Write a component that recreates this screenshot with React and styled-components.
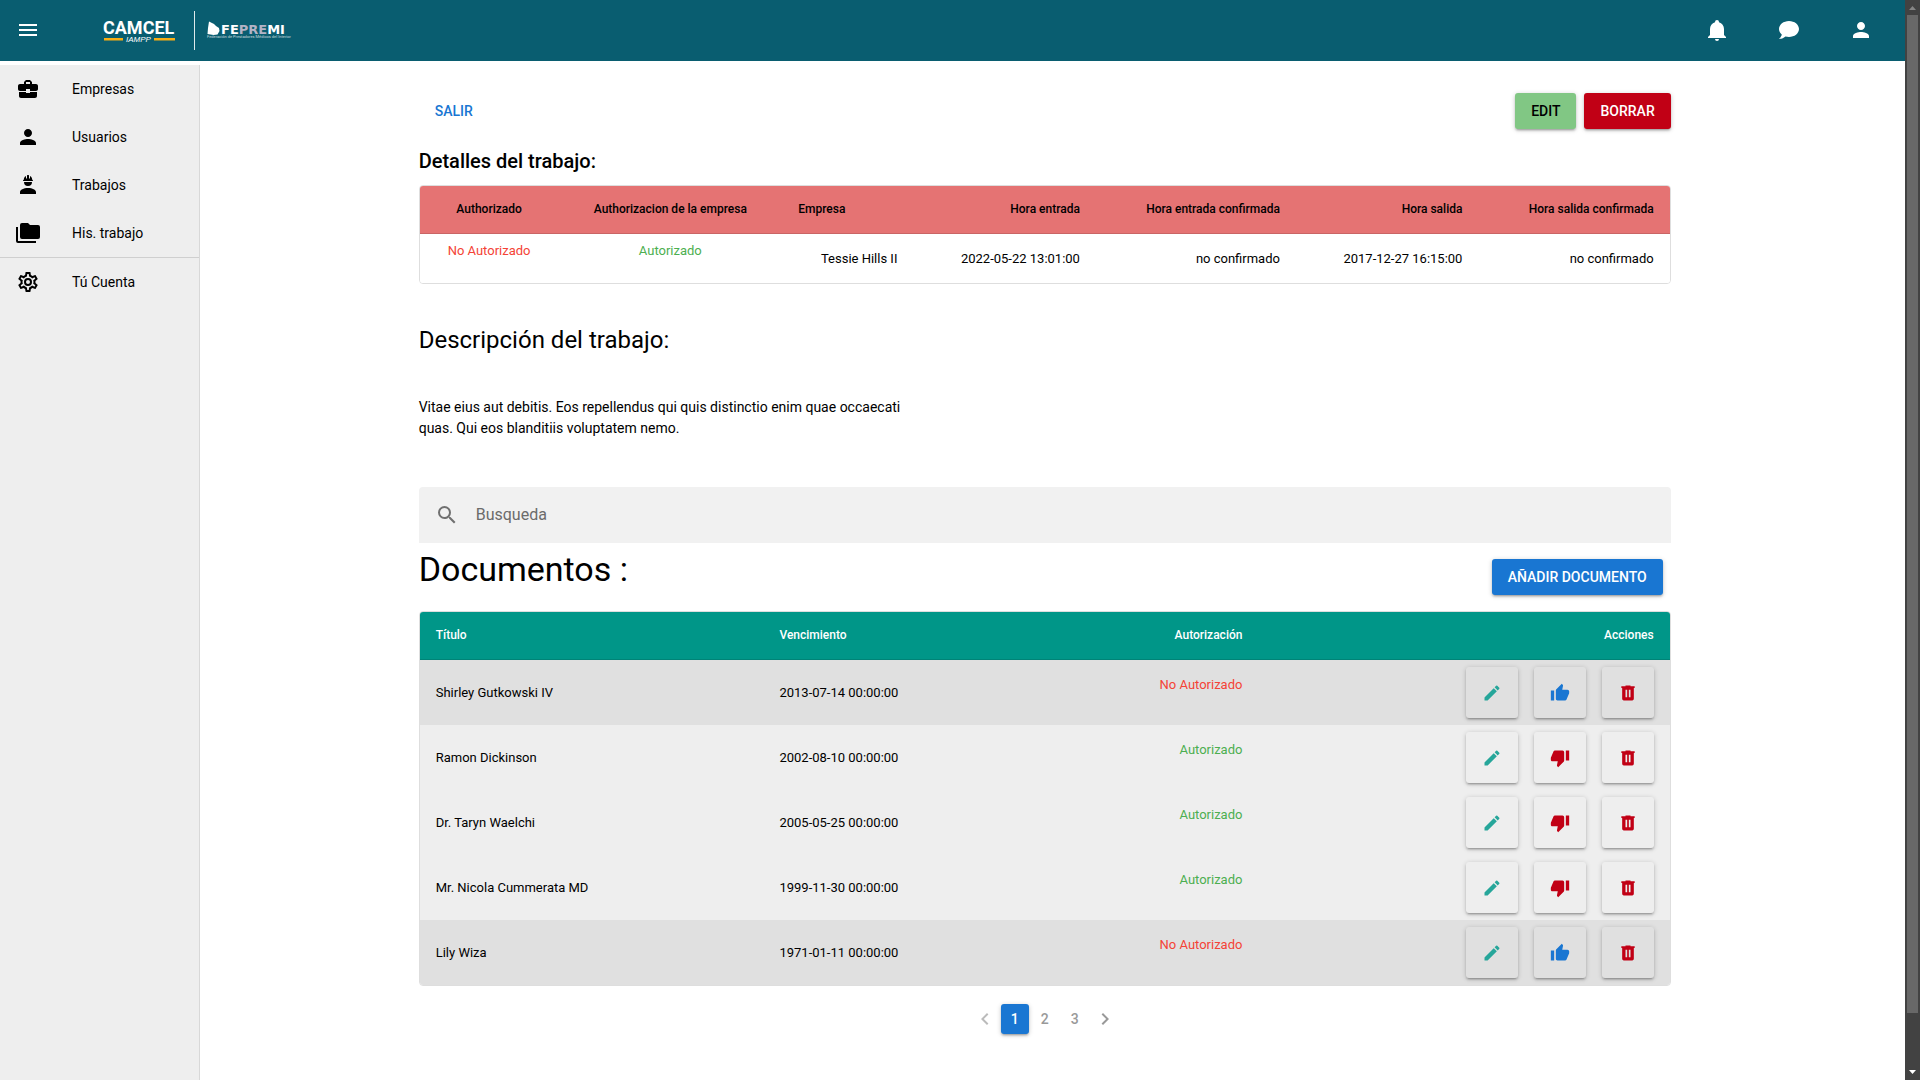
import React, { Component } from 'react'
import styled, { createGlobalStyle } from 'styled-components'
import {
    MdMenu,
    MdPerson,
    MdBusinessCenter,
    MdSearch,
    MdEdit,
    MdThumbUp,
    MdThumbDown,
    MdChevronLeft,
    MdChevronRight
} from 'react-icons/md'

const GlobalStyle = createGlobalStyle`
    *, *::before, *::after {
        box-sizing: border-box;
    }

    body {
        margin: 0;
        background: #fff;
        color: #000;
        font-family: Roboto, "Liberation Sans", sans-serif;
        font-size: 14px;
        line-height: 21px;
    }

    button, input {
        font-family: inherit;
    }

    svg {
        display: block;
        flex-shrink: 0;
    }
`

const raised = '0 1px 5px rgba(0, 0, 0, 0.2), 0 2px 2px rgba(0, 0, 0, 0.14), 0 3px 1px -2px rgba(0, 0, 0, 0.12)'

const Window = styled.div`
    display: flex;
    min-height: 100vh;
`

const Page = styled.div`
    display: flex;
    flex-direction: column;
    flex: 1;
    min-width: 0;
`

const AppBar = styled.header`
    display: flex;
    align-items: center;
    height: 61px;
    padding: 0 32px 1px 16px;
    background: #095d70;
    color: #fff;
`

const BarButton = styled.button`
    display: flex;
    padding: 0;
    border: 0;
    background: none;
    color: inherit;
    font-size: 24px;
    cursor: pointer;
`

const Brand = styled.a`
    margin-left: 56px;
    margin-right: auto;
`

const BarActions = styled.div`
    display: flex;
    gap: 48px;
`

const Body = styled.div`
    display: flex;
    flex: 1;
`

const Sider = styled.nav`
    width: 200px;
    flex-shrink: 0;
    margin-top: 4px;
    border-right: 1px solid #d8d8d8;
    background: #eee;
`

const SiderItem = styled.a`
    display: flex;
    align-items: center;
    gap: 32px;
    height: 48px;
    padding: 0 16px;
    color: #000;
    text-decoration: none;

    svg {
        font-size: 24px;
    }
`

const SiderDivider = styled.hr`
    height: 1px;
    margin: 0;
    border: 0;
    background: #cfcfcf;
`

const Main = styled.main`
    flex: 1;
    min-width: 0;
    padding: 32px 12.3% 32px 11.48%;
`

const Toolbar = styled.div`
    display: flex;
    gap: 8px;
`

const Button = styled.button`
    height: 36px;
    padding: 0 16px;
    border: 0;
    border-radius: 3px;
    background: ${props => props.$background || 'transparent'};
    box-shadow: ${props => (props.$background ? raised : 'none')};
    color: ${props => props.$color || '#fff'};
    font-size: 14px;
    font-weight: 500;
    line-height: 24px;
    text-transform: uppercase;
    cursor: pointer;
`

const ExitButton = styled(Button)`
    margin-right: auto;
`

const JobTitle = styled.h1`
    margin: 16px 0 8px;
    font-size: 20px;
    font-weight: 500;
    line-height: 32px;
`

const DescriptionTitle = styled.h2`
    margin: 40px 0 41px;
    font-size: 24px;
    font-weight: 400;
    line-height: 32px;
`

const Description = styled.p`
    max-width: 40%;
    margin: 0 0 48px;
`

const TableCard = styled.div`
    overflow: hidden;
    border: 1px solid #dedede;
    border-radius: 4px;
`

const Table = styled.table`
    width: 100%;
    border-collapse: separate;
    border-spacing: 0;
    table-layout: fixed;
`

const HeadRow = styled.tr`
    background: ${props => props.$background};
    color: ${props => props.$color};
`

const Row = styled.tr`
    background: ${props => props.$background || '#fff'};
`

const HeadCell = styled.th`
    width: ${props => props.$width};
    height: 48px;
    padding: 0 16px;
    border-bottom: 1px solid rgba(0, 0, 0, 0.12);
    font-size: 12px;
    font-weight: 500;
    text-align: ${props => props.$align || 'left'};
    white-space: nowrap;
`

const Cell = styled.td`
    padding: 7px 16px;
    font-size: 13px;
    line-height: 19px;
    text-align: ${props => props.$align || 'left'};
    white-space: nowrap;
`

const Status = styled.p`
    margin: 0 0 16px;
    color: ${props => (props.$ok ? '#4caf50' : '#f44336')};
`

const SearchBox = styled.label`
    display: flex;
    align-items: center;
    gap: 17px;
    height: 56px;
    padding: 0 16px;
    border-radius: 4px 4px 0 0;
    background: #f1f1f1;
    color: #707070;
    font-size: 24px;
`

const SearchInput = styled.input`
    flex: 1;
    padding: 0;
    border: 0;
    outline: 0;
    background: none;
    font-size: 16px;
    line-height: 24px;

    &::placeholder {
        color: #6b6b6b;
        opacity: 1;
    }
`

const DocumentsHeader = styled.div`
    display: flex;
    align-items: flex-end;
    justify-content: space-between;
    padding: 0 8px 16px 0;
`

const DocumentsTitle = styled.h2`
    margin: 6px 0;
    font-size: 34px;
    font-weight: 400;
    line-height: 40px;
`

const RowActions = styled.div`
    display: flex;
    justify-content: flex-end;
    gap: 16px;
`

const IconButton = styled.button`
    display: flex;
    align-items: center;
    justify-content: center;
    width: 52px;
    height: 51px;
    padding: 0;
    border: 0;
    border-radius: 3px;
    background: transparent;
    box-shadow: ${raised};
    color: ${props => props.$color};
    font-size: 20px;
    cursor: pointer;
`

const Pagination = styled.nav`
    display: flex;
    justify-content: center;
    gap: 2px;
    margin-top: 18px;
`

const PageButton = styled.button`
    display: flex;
    align-items: center;
    justify-content: center;
    width: 28px;
    height: 30px;
    padding: 0;
    border: 0;
    border-radius: 3px;
    background: ${props => (props.$active ? '#1976d2' : 'transparent')};
    box-shadow: ${props => (props.$active ? raised : 'none')};
    color: ${props => (props.$active ? '#fff' : '#999')};
    font-size: 14px;
    font-weight: 500;
    cursor: pointer;

    &:disabled {
        color: #bbb;
    }

    svg {
        font-size: 24px;
    }
`

const ScrollTrack = styled.div`
    position: sticky;
    top: 0;
    display: flex;
    flex-direction: column;
    justify-content: space-between;
    width: 15px;
    height: 100vh;
    flex-shrink: 0;
    padding: 0 2px;
    background: #424242;
`

const ScrollThumb = styled.div`
    flex: 0 1 998px;
    margin-bottom: auto;
    background: #686868;
`

const BLUE = '#1976d2'
const RED = '#c10015'
const TEAL = '#26a69a'

const jobColumns = [
    { label: 'Authorizado', width: '11.1%', align: 'center' },
    { label: 'Authorizacion de la empresa', width: '17.9%', align: 'center' },
    { label: 'Empresa', width: '10.5%', align: 'left' },
    { label: 'Hora entrada', width: '14.6%', align: 'right' },
    { label: 'Hora entrada confirmada', width: '16%', align: 'right' },
    { label: 'Hora salida', width: '14.6%', align: 'right' },
    { label: 'Hora salida confirmada', width: '15.3%', align: 'right' }
]

const documentColumns = [
    { label: 'Título', width: '27.5%', align: 'left' },
    { label: 'Vencimiento', width: '19.5%', align: 'left' },
    { label: 'Autorización', width: '20.1%', align: 'right' },
    { label: 'Acciones', width: '32.9%', align: 'right' }
]

const documents = [
    { title: 'Shirley Gutkowski IV', expires: '2013-07-14 00:00:00', authorized: false },
    { title: 'Ramon Dickinson', expires: '2002-08-10 00:00:00', authorized: true },
    { title: 'Dr. Taryn Waelchi', expires: '2005-05-25 00:00:00', authorized: true },
    { title: 'Mr. Nicola Cummerata MD', expires: '1999-11-30 00:00:00', authorized: true },
    { title: 'Lily Wiza', expires: '1971-01-11 00:00:00', authorized: false }
]

const Logo = () => (
    <svg width="200" height="44" viewBox="0 0 200 44" role="img" aria-label="CAMCEL IAMPP FEPREMI">
        <text x="7" y="26" fill="#fff" fontFamily="Roboto, sans-serif" fontSize="18" fontWeight="700">CAMCEL</text>
        <path d="M8 30h19v2.500H8zM58 30h21v2.500H58z" fill="#f9ae14" />
        <text x="30" y="34" fill="#fff" fontFamily="'Liberation Sans', sans-serif" fontSize="8" fontStyle="italic">IAMPP</text>
        <path d="M98 3h1v39h-1z" fill="#dfe9eb" />
        <path d="M113 13.500l3 1.500 2 1 2 2 3 2 .5 3-2 3.500-4 .5-6-1 .5-6z" fill="#fff" />
        <text x="125" y="26" fill="#fff" fontFamily="'DejaVu Sans', sans-serif" fontSize="13" fontWeight="700">
            FE<tspan fill="#b3b3c6">PRE</tspan>MI
        </text>
        <text x="111" y="30" fill="#c5d8dc" fontFamily="Roboto, sans-serif" fontSize="4">Federación de Prestadores Médicos del Interior</text>
    </svg>
)

const Icon = ({ d }) => (
    <svg width="1em" height="1em" viewBox="0 0 24 24" fill="currentColor">
        <path d={d} />
    </svg>
)

const icons = {
    bell: 'M21 19v1H3v-1l2-2v-6c0-3.100 2.030-5.830 5-6.710V4a2 2 0 0 1 4 0v.29c2.970.88 5 3.610 5 6.710v6l2 2m-7 2a2 2 0 0 1-4 0',
    chat: 'M12 3c5.500 0 10 3.580 10 8s-4.500 8-10 8c-1.240 0-2.430-.18-3.530-.5C5.550 21 2 21 2 21c2.330-2.330 2.700-3.900 2.750-4.500C3.050 15.070 2 13.130 2 11c0-4.420 4.500-8 10-8z',
    trash: 'M9 3v1H4v2h1v13a2 2 0 0 0 2 2h10a2 2 0 0 0 2-2V6h1V4h-5V3H9m0 5h2v9H9V8m4 0h2v9h-2V8z',
    worker: 'M12 15c-4.420 0-8 1.790-8 4v2h16v-2c0-2.210-3.580-4-8-4M8 9a4 4 0 0 0 8 0M11.500 2c-.3 0-.5.210-.5.5v3h-1V3S7.750 3.860 7.750 6.750c0 0-.75.140-.75 1.250h10c-.05-1.110-.75-1.250-.75-1.250C16.250 3.860 14 3 14 3v2.500h-1v-3c0-.29-.19-.5-.5-.5h-1z',
    folders: 'M22 4h-8l-2-2H6a2 2 0 0 0-2 2v12a2 2 0 0 0 2 2h16a2 2 0 0 0 2-2V6a2 2 0 0 0-2-2M2 6H0v14a2 2 0 0 0 2 2h18v-2H2V6z',
    cog: 'M12,8A4,4 0 0,1 16,12A4,4 0 0,1 12,16A4,4 0 0,1 8,12A4,4 0 0,1 12,8M12,10A2,2 0 0,0 10,12A2,2 0 0,0 12,14A2,2 0 0,0 14,12A2,2 0 0,0 12,10M10,22C9.75,22 9.54,21.82 9.5,21.58L9.13,18.93C8.5,18.68 7.96,18.34 7.44,17.94L4.95,18.95C4.73,19.03 4.46,18.95 4.34,18.73L2.34,15.27C2.21,15.05 2.27,14.78 2.46,14.63L4.57,12.97L4.5,12L4.57,11L2.46,9.37C2.27,9.22 2.21,8.95 2.34,8.73L4.34,5.27C4.46,5.05 4.73,4.96 4.95,5.05L7.44,6.05C7.96,5.66 8.5,5.32 9.13,5.07L9.5,2.42C9.54,2.18 9.75,2 10,2H14C14.25,2 14.46,2.18 14.5,2.42L14.87,5.07C15.5,5.32 16.04,5.66 16.56,6.05L19.05,5.05C19.27,4.96 19.54,5.05 19.66,5.27L21.66,8.73C21.79,8.95 21.73,9.22 21.54,9.37L19.43,11L19.5,12L19.43,13L21.54,14.63C21.73,14.78 21.79,15.05 21.66,15.27L19.66,18.73C19.54,18.95 19.27,19.04 19.05,18.95L16.56,17.95C16.04,18.34 15.5,18.68 14.87,18.93L14.5,21.58C14.46,21.82 14.25,22 14,22H10M11.25,4L10.88,6.61C9.68,6.86 8.62,7.5 7.85,8.39L5.44,7.35L4.69,8.65L6.8,10.2C6.4,11.37 6.4,12.64 6.8,13.8L4.68,15.36L5.43,16.66L7.86,15.62C8.63,16.5 9.68,17.14 10.87,17.38L11.24,20H12.76L13.13,17.39C14.32,17.14 15.37,16.5 16.14,15.62L18.57,16.66L19.32,15.36L17.2,13.81C17.6,12.64 17.6,11.37 17.2,10.2L19.31,8.65L18.56,7.35L16.15,8.39C15.38,7.5 14.32,6.86 13.12,6.62L12.75,4H11.25Z'
}

class JobDocuments extends Component {

    constructor(props) {
        super(props)
        this.state = {
            search: '',
            page: 1
        }
    }

    handleOnPageClick(page) {
        this.setState({ page })
    }

    renderHead(columns, background, color) {
        return (
            <thead>
                <HeadRow $background={background} $color={color}>
                    {columns.map(column => (
                        <HeadCell key={column.label} $width={column.width} $align={column.align}>
                            {column.label}
                        </HeadCell>
                    ))}
                </HeadRow>
            </thead>
        )
    }

    renderDocument(document) {
        const { title, expires, authorized } = document

        return (
            <Row key={title} $background={authorized ? '#eee' : '#e0e0e0'}>
                <Cell>{title}</Cell>
                <Cell>{expires}</Cell>
                <Cell $align="right">
                    <Status $ok={authorized}>{authorized ? 'Autorizado' : 'No Autorizado'}</Status>
                </Cell>
                <Cell $align="right">
                    <RowActions>
                        <IconButton type="button" aria-label="Editar" $color={TEAL}><MdEdit /></IconButton>
                        <IconButton
                            type="button"
                            aria-label={authorized ? 'Desautorizar' : 'Autorizar'}
                            $color={authorized ? RED : BLUE}
                        >
                            {authorized ? <MdThumbDown /> : <MdThumbUp />}
                        </IconButton>
                        <IconButton type="button" aria-label="Borrar" $color={RED}><Icon d={icons.trash} /></IconButton>
                    </RowActions>
                </Cell>
            </Row>
        )
    }

    render() {
        const { search, page } = this.state

        return (
            <Main>
                <Toolbar>
                    <ExitButton type="button" $color={BLUE}>Salir</ExitButton>
                    <Button type="button" $background="#81c784" $color="#000">Edit</Button>
                    <Button type="button" $background={RED}>Borrar</Button>
                </Toolbar>

                <JobTitle>Detalles del trabajo:</JobTitle>
                <TableCard>
                    <Table>
                        {this.renderHead(jobColumns, '#e57373', '#000')}
                        <tbody>
                            <Row>
                                <Cell $align="center"><Status>No Autorizado</Status></Cell>
                                <Cell $align="center"><Status $ok>Autorizado</Status></Cell>
                                <Cell $align="right">Tessie Hills II</Cell>
                                <Cell $align="right">2022-05-22 13:01:00</Cell>
                                <Cell $align="right">no confirmado</Cell>
                                <Cell $align="right">2017-12-27 16:15:00</Cell>
                                <Cell $align="right">no confirmado</Cell>
                            </Row>
                        </tbody>
                    </Table>
                </TableCard>

                <DescriptionTitle>Descripción del trabajo:</DescriptionTitle>
                <Description>
                    Vitae eius aut debitis. Eos repellendus qui quis distinctio enim quae occaecati
                    quas. Qui eos blanditiis voluptatem nemo.
                </Description>

                <SearchBox>
                    <MdSearch />
                    <SearchInput
                        type="text"
                        aria-label="Busqueda"
                        placeholder="Busqueda"
                        value={search}
                        onChange={e => this.setState({ search: e.target.value })}
                    />
                </SearchBox>

                <DocumentsHeader>
                    <DocumentsTitle>Documentos :</DocumentsTitle>
                    <Button type="button" $background={BLUE}>Añadir documento</Button>
                </DocumentsHeader>
                <TableCard>
                    <Table>
                        {this.renderHead(documentColumns, '#009688', '#fff')}
                        <tbody>{documents.map(document => this.renderDocument(document))}</tbody>
                    </Table>
                </TableCard>

                <Pagination aria-label="Páginas">
                    <PageButton
                        type="button"
                        aria-label="Anterior"
                        disabled={page === 1}
                        onClick={() => this.handleOnPageClick(page - 1)}
                    >
                        <MdChevronLeft />
                    </PageButton>
                    {[1, 2, 3].map(n => (
                        <PageButton key={n} type="button" $active={n === page} onClick={() => this.handleOnPageClick(n)}>
                            {n}
                        </PageButton>
                    ))}
                    <PageButton
                        type="button"
                        aria-label="Siguiente"
                        disabled={page === 3}
                        onClick={() => this.handleOnPageClick(page + 1)}
                    >
                        <MdChevronRight />
                    </PageButton>
                </Pagination>
            </Main>
        )
    }
}

const App = () => (
    <Window>
        <GlobalStyle />
        <Page>
            <AppBar>
                <BarButton type="button" aria-label="Menú"><MdMenu /></BarButton>
                <Brand href="#inicio"><Logo /></Brand>
                <BarActions>
                    <BarButton type="button" aria-label="Notificaciones"><Icon d={icons.bell} /></BarButton>
                    <BarButton type="button" aria-label="Mensajes"><Icon d={icons.chat} /></BarButton>
                    <BarButton type="button" aria-label="Perfil"><MdPerson /></BarButton>
                </BarActions>
            </AppBar>
            <Body>
                <Sider>
                    <SiderItem href="#empresas"><MdBusinessCenter />Empresas</SiderItem>
                    <SiderItem href="#usuarios"><MdPerson />Usuarios</SiderItem>
                    <SiderItem href="#trabajos"><Icon d={icons.worker} />Trabajos</SiderItem>
                    <SiderItem href="#historial"><Icon d={icons.folders} />His. trabajo</SiderItem>
                    <SiderDivider />
                    <SiderItem href="#cuenta"><Icon d={icons.cog} />Tú Cuenta</SiderItem>
                </Sider>
                <JobDocuments />
            </Body>
        </Page>
        <ScrollTrack aria-hidden="true">
            <svg width="11" height="15" viewBox="0 0 11 15"><path d="M2 10l3.500-4 3.500 4z" fill="#858585" /></svg>
            <ScrollThumb />
            <svg width="11" height="15" viewBox="0 0 11 15"><path d="M2 5l3.500 4 3.500-4z" fill="#fff" /></svg>
        </ScrollTrack>
    </Window>
)

export default App
